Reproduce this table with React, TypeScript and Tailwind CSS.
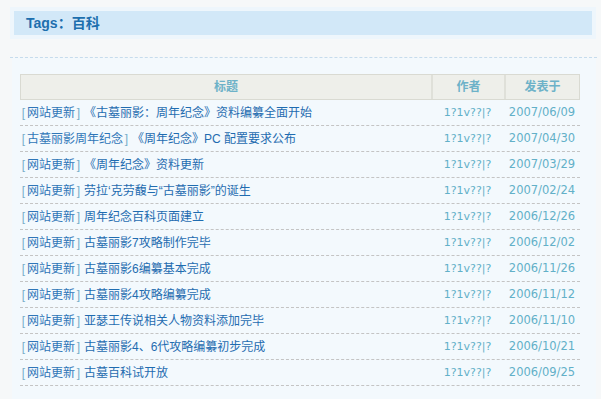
const rows = [
  { cat: "网站更新", title: "《古墓丽影：周年纪念》资料编纂全面开始", date: "2007/06/09" },
  { cat: "古墓丽影周年纪念", title: "《周年纪念》PC 配置要求公布", date: "2007/04/30" },
  { cat: "网站更新", title: "《周年纪念》资料更新", date: "2007/03/29" },
  { cat: "网站更新", title: "劳拉‘克劳馥与“古墓丽影”的诞生", date: "2007/02/24" },
  { cat: "网站更新", title: "周年纪念百科页面建立", date: "2006/12/26" },
  { cat: "网站更新", title: "古墓丽影7攻略制作完毕", date: "2006/12/02" },
  { cat: "网站更新", title: "古墓丽影6编纂基本完成", date: "2006/11/26" },
  { cat: "网站更新", title: "古墓丽影4攻略编纂完成", date: "2006/11/12" },
  { cat: "网站更新", title: "亚瑟王传说相关人物资料添加完毕", date: "2006/11/10" },
  { cat: "网站更新", title: "古墓丽影4、6代攻略编纂初步完成", date: "2006/10/21" },
  { cat: "网站更新", title: "古墓百科试开放", date: "2006/09/25" },
];

export default function App() {
  return (
    <div className="h-[399px] w-[601px] overflow-hidden bg-[#f6f8f9] pt-[7px] font-['Liberation_Sans','Noto_Sans_CJK_SC',sans-serif] text-[12px]">
      <div className="ml-[10px] w-[586px] bg-[#eef6fc] p-[4px]">
        <div className="flex h-[24px] items-center bg-[#d2e8f8] pl-[12px] text-[14px] font-bold text-[#1d6fae]">
          Tags：百科
        </div>
      </div>

      <div className="ml-[10px] mt-[18px] w-[587px] border-t border-dashed border-[#c6dced]">
        <div className="ml-[2px] mr-[1px] h-[400px] bg-[#f3f9fd] pl-[8px] pt-[16px]">
          <div className="w-[560px]">
            <div className="flex h-[26px] border border-[#d9dad2] bg-[#eeefea] font-bold text-[#6db2c8]">
              <div className="flex w-[410px] items-center justify-center">标题</div>
              <div className="flex w-[73px] items-center justify-center border-l-2 border-[#dfe0d9]">作者</div>
              <div className="flex flex-1 items-center justify-center border-l-2 border-[#dfe0d9]">发表于</div>
            </div>
            {rows.map((r) => (
              <div
                key={r.date + r.title}
                className="flex h-[26px] items-center border-b border-dashed border-[#c4c4c4] pt-[1px]"
              >
                <div className="w-[411px] whitespace-nowrap text-[#1f6cb0]">
                  <span className="inline-block w-[7px] text-center text-[#78adc9]">[</span>
                  <span className="text-[#2f76b8]">{r.cat}</span>
                  <span className="inline-block w-[7px] text-center text-[#78adc9]">]</span>
                  <span className="ml-[2px]">{r.title}</span>
                </div>
                <div className="w-[73px] text-center font-['DejaVu_Sans',sans-serif] text-[11px] text-[#62b0c8]">1?1v??|?</div>
                <div className="flex-1 text-center font-['DejaVu_Sans',sans-serif] text-[11.5px] text-[#62b0c8]">{r.date}</div>
              </div>
            ))}
          </div>
        </div>
      </div>
    </div>
  );
}
